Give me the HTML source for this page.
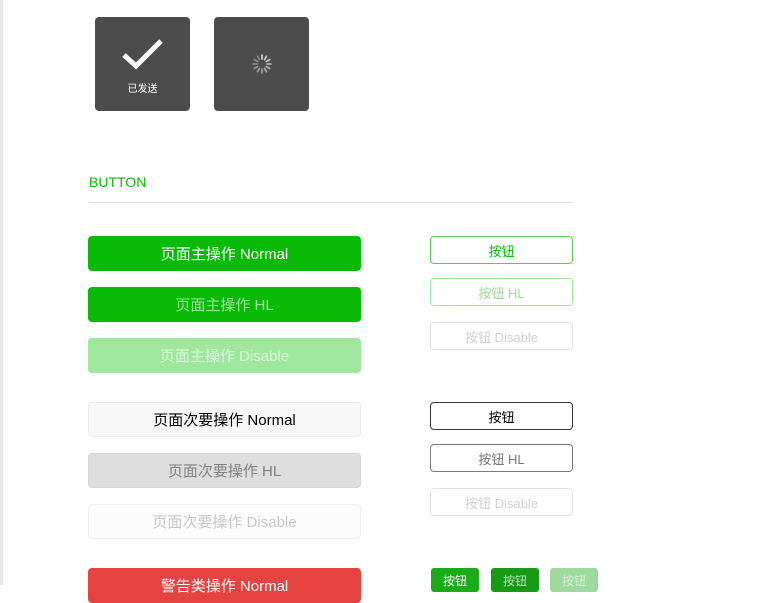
<!DOCTYPE html>
<html><head><meta charset="utf-8"><style>
body{margin:0;width:780px;height:585px;overflow:hidden;background:#fff;position:relative;font-family:"Liberation Sans","Noto Sans CJK SC",sans-serif}
.a{position:absolute;box-sizing:border-box;display:flex;align-items:center;justify-content:center;border-radius:4px}
.big{left:88px;width:273px;height:35px;font-size:15px}
.sm{left:430px;width:143px;height:28px;font-size:13px;border:1px solid}
.mini{width:48px;height:24px;font-size:12px;color:#fff;border-radius:3px}
</style></head><body>
<div style="position:absolute;left:0;top:0;width:3px;height:585px;background:#e8e8e8"></div>
<div class="a" style="left:95px;top:17px;width:95px;height:94px;background:#4c4c4c;flex-direction:column">
<svg width="44" height="34" viewBox="0 0 44 34" style="margin-top:4px"><path d="M3 18 L15 29 L40 4" stroke="#fff" stroke-width="5" fill="none"/></svg>
<div style="color:#fff;font-size:10px;margin-top:9px">已发送</div></div>
<div class="a" style="left:214px;top:17px;width:95px;height:94px;background:#4c4c4c">
<svg width="22" height="22" viewBox="-11 -11 22 22"><g stroke="#ddd" stroke-width="1.6" stroke-linecap="round">
<line x1="0" y1="-5" x2="0" y2="-9" transform="rotate(0)"/><line x1="0" y1="-5" x2="0" y2="-9" transform="rotate(30)" opacity=".9"/><line x1="0" y1="-5" x2="0" y2="-9" transform="rotate(60)" opacity=".85"/><line x1="0" y1="-5" x2="0" y2="-9" transform="rotate(90)" opacity=".8"/><line x1="0" y1="-5" x2="0" y2="-9" transform="rotate(120)" opacity=".75"/><line x1="0" y1="-5" x2="0" y2="-9" transform="rotate(150)" opacity=".7"/><line x1="0" y1="-5" x2="0" y2="-9" transform="rotate(180)" opacity=".65"/><line x1="0" y1="-5" x2="0" y2="-9" transform="rotate(210)" opacity=".6"/><line x1="0" y1="-5" x2="0" y2="-9" transform="rotate(240)" opacity=".55"/><line x1="0" y1="-5" x2="0" y2="-9" transform="rotate(270)" opacity=".5"/><line x1="0" y1="-5" x2="0" y2="-9" transform="rotate(300)" opacity=".45"/><line x1="0" y1="-5" x2="0" y2="-9" transform="rotate(330)" opacity=".4"/></g></svg></div>
<div style="position:absolute;left:89px;top:174px;color:#09bb07;font-size:14px">BUTTON</div>
<div style="position:absolute;left:89px;top:202px;width:484px;height:1px;background:#ddd"></div>

<div class="a big" style="top:236px;background:#09bb07;color:#fff">页面主操作 Normal</div>
<div class="a big" style="top:287px;background:#09bb07;color:rgba(255,255,255,.6)">页面主操作 HL</div>
<div class="a big" style="top:338px;background:#9ee79d;color:rgba(255,255,255,.65)">页面主操作 Disable</div>
<div class="a big" style="top:402px;background:#f8f8f8;border:1px solid #ececec;color:#000">页面次要操作 Normal</div>
<div class="a big" style="top:453px;background:#dedede;border:1px solid #d6d6d6;color:#808080">页面次要操作 HL</div>
<div class="a big" style="top:504px;background:#fcfcfc;border:1px solid #f0f0f0;color:#c8c8c8">页面次要操作 Disable</div>
<div class="a big" style="top:568px;background:#e64340;color:#fff">警告类操作 Normal</div>

<div class="a sm" style="top:236px;border-color:#5bc95a;color:#09bb07">按钮</div>
<div class="a sm" style="top:278px;border-color:#9ee79d;color:#9ed99d">按钮 HL</div>
<div class="a sm" style="top:322px;border-color:#e2e2e2;color:#d0d0d0">按钮 Disable</div>
<div class="a sm" style="top:402px;border-color:#353535;color:#000">按钮</div>
<div class="a sm" style="top:444px;border-color:#7b7b7b;color:#777">按钮 HL</div>
<div class="a sm" style="top:488px;border-color:#e2e2e2;color:#d0d0d0">按钮 Disable</div>

<div class="a mini" style="left:431px;top:568px;background:#1aad19">按钮</div>
<div class="a mini" style="left:491px;top:568px;background:#179b16;color:rgba(255,255,255,.7)">按钮</div>
<div class="a mini" style="left:550px;top:568px;background:#9ed99d;color:rgba(255,255,255,.6)">按钮</div>
</body></html>
